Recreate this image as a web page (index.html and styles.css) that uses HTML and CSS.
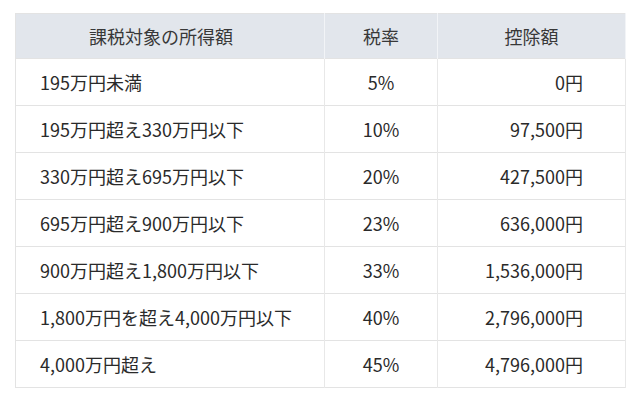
FILE: index.html
```
<!DOCTYPE html>
<html lang="ja">
<head>
<meta charset="utf-8">
<link rel="stylesheet" href="styles.css">
</head>
<body>
<table class="tax">
  <colgroup>
    <col class="c1"><col class="c2"><col class="c3">
  </colgroup>
  <thead>
    <tr><th class="h1">課税対象の所得額</th><th>税率</th><th>控除額</th></tr>
  </thead>
  <tbody>
    <tr><td class="range">195万円未満</td><td class="rate">5%</td><td class="ded">0円</td></tr>
    <tr><td class="range">195万円超え330万円以下</td><td class="rate">10%</td><td class="ded">97,500円</td></tr>
    <tr><td class="range">330万円超え695万円以下</td><td class="rate">20%</td><td class="ded">427,500円</td></tr>
    <tr><td class="range">695万円超え900万円以下</td><td class="rate">23%</td><td class="ded">636,000円</td></tr>
    <tr><td class="range">900万円超え1,800万円以下</td><td class="rate">33%</td><td class="ded">1,536,000円</td></tr>
    <tr><td class="range">1,800万円を超え4,000万円以下</td><td class="rate">40%</td><td class="ded">2,796,000円</td></tr>
    <tr><td class="range">4,000万円超え</td><td class="rate">45%</td><td class="ded">4,796,000円</td></tr>
  </tbody>
</table>
</body>
</html>
```
FILE: styles.css
```
html, body {
  margin: 0;
  background: #fff;
}
body {
  padding: 13px 15px;
  font-family: "Noto Sans CJK JP", "Noto Sans", sans-serif;
  color: #2a2a2a;
}
.tax {
  width: 610px;
  table-layout: fixed;
  border-collapse: collapse;
  font-size: 18px;
  border: 1px solid #e3e3e3;
}
.c1 { width: 309px; }
.c2 { width: 113px; }
.c3 { width: 188px; }
.tax th {
  background: #e2e6ec;
  font-weight: 400;
  color: #383838;
  height: 44px;
  padding: 0;
  text-align: center;
  border-right: 1px solid #f2f4f7;
  line-height: 1;
}
.tax th.h1 { padding-right: 18px; }
.tax td {
  height: 46px;
  padding: 0;
  border-top: 1px solid #e3e3e3;
  border-right: 1px solid #e8e8e8;
  line-height: 1;
}
.tax td.range { padding-left: 24px; text-align: left; }
.tax td.rate { text-align: center; }
.tax td.ded { text-align: right; padding-right: 42px; }
```
